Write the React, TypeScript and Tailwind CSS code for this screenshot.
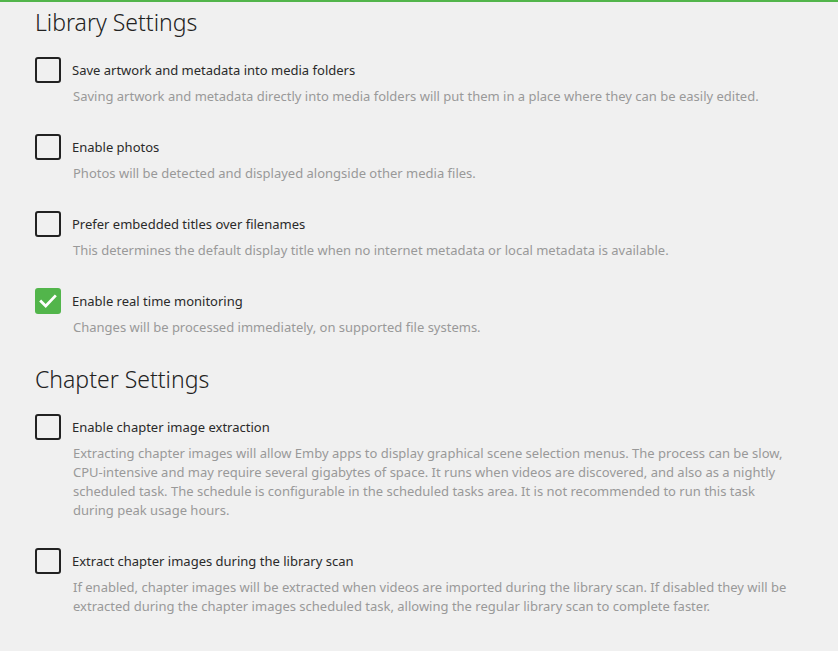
type Item = {
  label: string;
  lines: string[];
  checked?: boolean;
};

const library: Item[] = [
  {
    label: 'Save artwork and metadata into media folders',
    lines: ['Saving artwork and metadata directly into media folders will put them in a place where they can be easily edited.'],
  },
  {
    label: 'Enable photos',
    lines: ['Photos will be detected and displayed alongside other media files.'],
  },
  {
    label: 'Prefer embedded titles over filenames',
    lines: ['This determines the default display title when no internet metadata or local metadata is available.'],
  },
  {
    label: 'Enable real time monitoring',
    lines: ['Changes will be processed immediately, on supported file systems.'],
    checked: true,
  },
];

const chapters: Item[] = [
  {
    label: 'Enable chapter image extraction',
    lines: [
      'Extracting chapter images will allow Emby apps to display graphical scene selection menus. The process can be slow,',
      'CPU-intensive and may require several gigabytes of space. It runs when videos are discovered, and also as a nightly',
      'scheduled task. The schedule is configurable in the scheduled tasks area. It is not recommended to run this task',
      'during peak usage hours.',
    ],
  },
  {
    label: 'Extract chapter images during the library scan',
    lines: [
      'If enabled, chapter images will be extracted when videos are imported during the library scan. If disabled they will be',
      'extracted during the chapter images scheduled task, allowing the regular library scan to complete faster.',
    ],
  },
];

function Checkbox({ checked }: { checked?: boolean }) {
  if (checked) {
    return (
      <div className="w-[26px] h-[26px] rounded-[3px] bg-[#52b54b] flex items-center justify-center shrink-0">
        <svg viewBox="0 0 24 24" className="w-[22px] h-[22px]" fill="none" stroke="white" strokeWidth="3" strokeLinecap="square">
          <path d="M4.5 12.5l5 5 10-10.5" />
        </svg>
      </div>
    );
  }
  return <div className="w-[26px] h-[26px] rounded-[3px] border-2 border-[#222] shrink-0" />;
}

function Setting({ item }: { item: Item }) {
  return (
    <div className="mb-[28px]">
      <div className="flex items-center gap-[11px] h-[26px]">
        <Checkbox checked={item.checked} />
        <span className="text-[13px] text-[#2a2a2a] leading-[26px]">{item.label}</span>
      </div>
      <div className="pl-[38px] mt-[4px] text-[13px] leading-[19px] text-[#999]">
        {item.lines.map((l) => (
          <div key={l} className="whitespace-nowrap">{l}</div>
        ))}
      </div>
    </div>
  );
}

export default function App() {
  return (
    <div className="min-h-[651px] bg-[#f0f0f0] border-t-2 border-[#52b54b] font-['Noto_Sans',sans-serif]">
      <div className="pl-[35px] pt-[4px]">
        <h2 className="text-[23px] font-light leading-[32px] text-[#222] mb-[19px]">Library Settings</h2>
        {library.map((i) => (
          <Setting key={i.label} item={i} />
        ))}
        <h2 className="text-[23px] font-light leading-[32px] text-[#222] mb-[19px] -mt-[2px]">Chapter Settings</h2>
        {chapters.map((i) => (
          <Setting key={i.label} item={i} />
        ))}
      </div>
    </div>
  );
}
